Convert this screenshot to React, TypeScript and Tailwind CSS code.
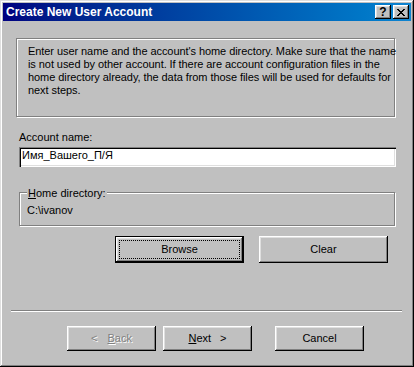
import React from 'react';

const raised =
  'bg-[#c0c0c0] shadow-[inset_-1px_-1px_0_#000,inset_1px_1px_0_#fff,inset_-2px_-2px_0_#808080,inset_2px_2px_0_#dfdfdf]';

const etched = 'border border-[#808080] shadow-[inset_1px_1px_0_#fff,1px_1px_0_#fff]';

const Button: React.FC<{ className?: string; children: React.ReactNode }> = ({ className = '', children }) => (
  <div className={`${raised} flex items-center justify-center ${className}`}>{children}</div>
);

const App: React.FC = () => {
  return (
    <div className="w-[414px] h-[367px] bg-[#c0c0c0] p-[3px] flex flex-col text-[11px] leading-[13px] text-black font-['Liberation_Sans',Arial,sans-serif] shadow-[inset_-1px_-1px_0_#000,inset_1px_1px_0_#dfdfdf,inset_-2px_-2px_0_#808080,inset_2px_2px_0_#fff]">
      {/* Title bar */}
      <div className="h-[18px] flex items-center pl-[3px] pr-[2px] bg-gradient-to-r from-[#000080] to-[#1084d0]">
        <span className="flex-1 text-white font-bold text-[12px] leading-[14px] whitespace-nowrap">
          Create New User Account
        </span>
        <div className={`${raised} w-[16px] h-[14px] flex items-center justify-center font-bold text-[12px] leading-[12px]`}>
          ?
        </div>
        <div className={`${raised} w-[16px] h-[14px] ml-[2px] flex items-center justify-center`}>
          <svg width="8" height="7" viewBox="0 0 8 7" shapeRendering="crispEdges">
            <path
              d="M0 0h2v1H0zM6 0h2v1H6zM1 1h2v1H1zM5 1h2v1H5zM2 2h4v1H2zM3 3h2v1H3zM2 4h4v1H2zM1 5h2v1H1zM5 5h2v1H5zM0 6h2v1H0zM6 6h2v1H6z"
              fill="#000"
            />
          </svg>
        </div>
      </div>

      {/* Intro */}
      <div className={`${etched} mt-[17px] ml-[13px] w-[379px] h-[79px] pt-[6px] pl-[11px] whitespace-nowrap tracking-[-0.07px]`}>
        <div>Enter user name and the account's home directory. Make sure that the name</div>
        <div>is not used by other account. If there are account configuration files in the</div>
        <div>home directory already, the data from those files will be used for defaults for</div>
        <div>next steps.</div>
      </div>

      {/* Account name */}
      <div className="mt-[14px] ml-[16px]">Account name:</div>
      <div className="mt-[3px] ml-[16px] w-[377px] h-[20px] bg-white pl-[3px] pt-[2px] shadow-[inset_1px_1px_0_#808080,inset_2px_2px_0_#000,inset_-1px_-1px_0_#fff,inset_-2px_-2px_0_#dfdfdf]">
        Имя_Вашего_П/Я
      </div>

      {/* Home directory */}
      <div className={`${etched} relative mt-[25px] ml-[16px] w-[376px] h-[34px] pt-[11px] pl-[7px]`}>
        <span className="absolute top-[-6px] left-[7px] px-[1px] bg-[#c0c0c0]">
          <span className="underline underline-offset-[1px]">H</span>ome directory:
        </span>
        <div>C:\ivanov</div>
      </div>

      <div className="flex mt-[10px] ml-[112px] gap-[15px]">
        <div className="w-[129px] h-[27px] bg-[#c0c0c0] p-[4px] flex shadow-[inset_0_0_0_1px_#000,inset_-2px_-2px_0_#000,inset_2px_2px_0_#fff,inset_-3px_-3px_0_#808080,inset_3px_3px_0_#dfdfdf]">
          <div className="flex-1 border border-dotted border-black flex items-center justify-center">Browse</div>
        </div>
        <Button className="w-[129px] h-[27px]">Clear</Button>
      </div>

      {/* Separator */}
      <div className="mt-[47px] ml-[8px] w-[391px] h-[2px] border-t border-t-[#808080] border-b border-b-white" />

      {/* Wizard buttons */}
      <div className="flex mt-[14px] ml-[64px]">
        <Button className="w-[89px] h-[25px] gap-[10px] text-[#808080] [text-shadow:1px_1px_0_#fff]">
          <span>&lt;</span>
          <span>
            <span className="underline underline-offset-[1px]">B</span>ack
          </span>
        </Button>
        <Button className="w-[89px] h-[25px] ml-[7px] gap-[9px]">
          <span>
            <span className="underline underline-offset-[1px]">N</span>ext
          </span>
          <span>&gt;</span>
        </Button>
        <Button className="w-[89px] h-[25px] ml-[23px]">Cancel</Button>
      </div>
    </div>
  );
};

export default App;
